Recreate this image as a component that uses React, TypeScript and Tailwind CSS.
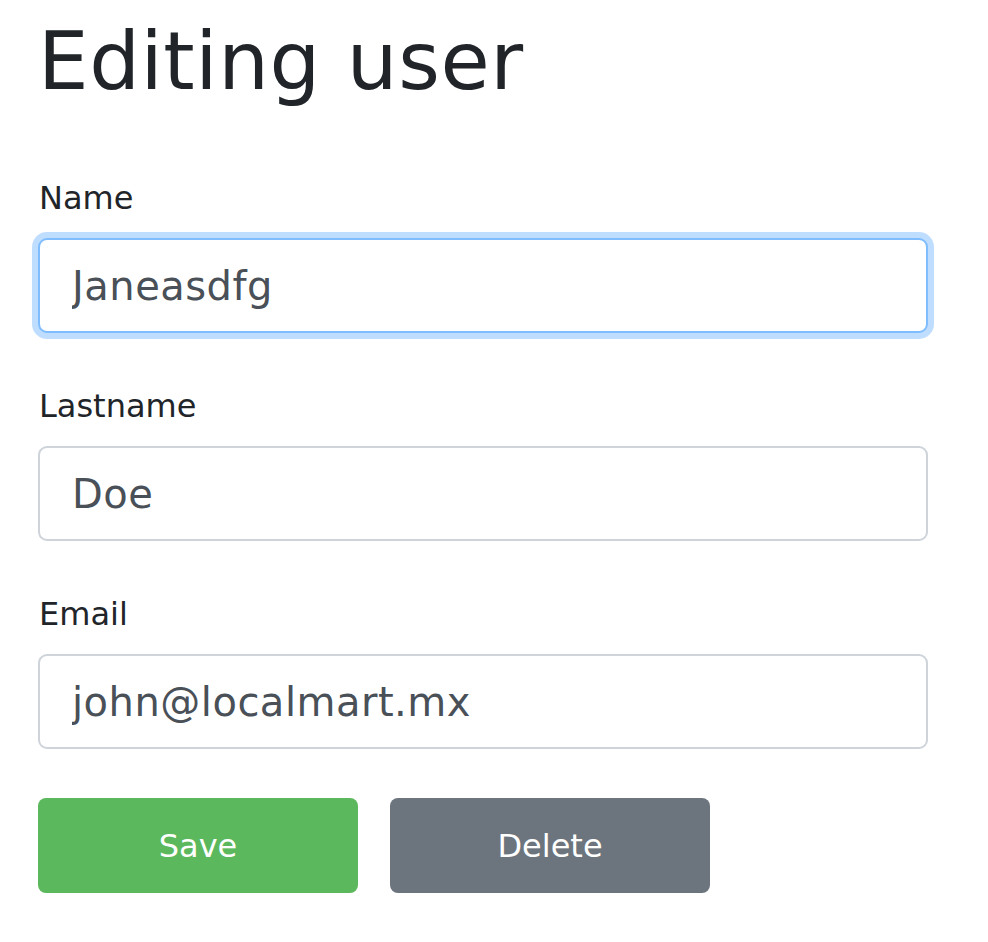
import React from "react";

const fields = [
  { label: "Name", value: "Janeasdfg", focused: true },
  { label: "Lastname", value: "Doe", focused: false },
  { label: "Email", value: "john@localmart.mx", focused: false },
];

export default function App() {
  return (
    <main
      className="min-h-[942px] bg-white pl-[38px] pt-[14px] text-[#212529]"
      style={{ fontFamily: '"DejaVu Sans", "Liberation Sans", sans-serif' }}
    >
      <h1 className="mb-[64px] text-[80px] font-normal leading-[96px] tracking-[0.6px]">Editing user</h1>

      <form className="w-[890px]" onSubmit={(e) => e.preventDefault()}>
        {fields.map((field) => (
          <div key={field.label} className="mb-[49px]">
            <label className="mb-[16px] block pl-[1px] text-[32px] leading-[48px]">{field.label}</label>
            <input
              defaultValue={field.value}
              className={
                field.focused
                  ? "block h-[95px] w-full rounded-[9px] border-2 border-[#80bdff] bg-white px-[32px] text-[40px] leading-[60px] tracking-[0.5px] text-[#495057] shadow-[0_0_0_6px_rgba(0,123,255,0.25)] outline-none"
                  : "block h-[95px] w-full rounded-[9px] border-2 border-[#ced4da] bg-white px-[32px] text-[40px] leading-[60px] tracking-[0.5px] text-[#495057] outline-none"
              }
            />
          </div>
        ))}

        <div className="flex gap-[32px]">
          <button className="h-[95px] w-[320px] rounded-[8px] bg-[#5cb85c] text-[32px] text-white">Save</button>
          <button className="h-[95px] w-[320px] rounded-[8px] bg-[#6c757d] text-[32px] text-white">Delete</button>
        </div>
      </form>
    </main>
  );
}
